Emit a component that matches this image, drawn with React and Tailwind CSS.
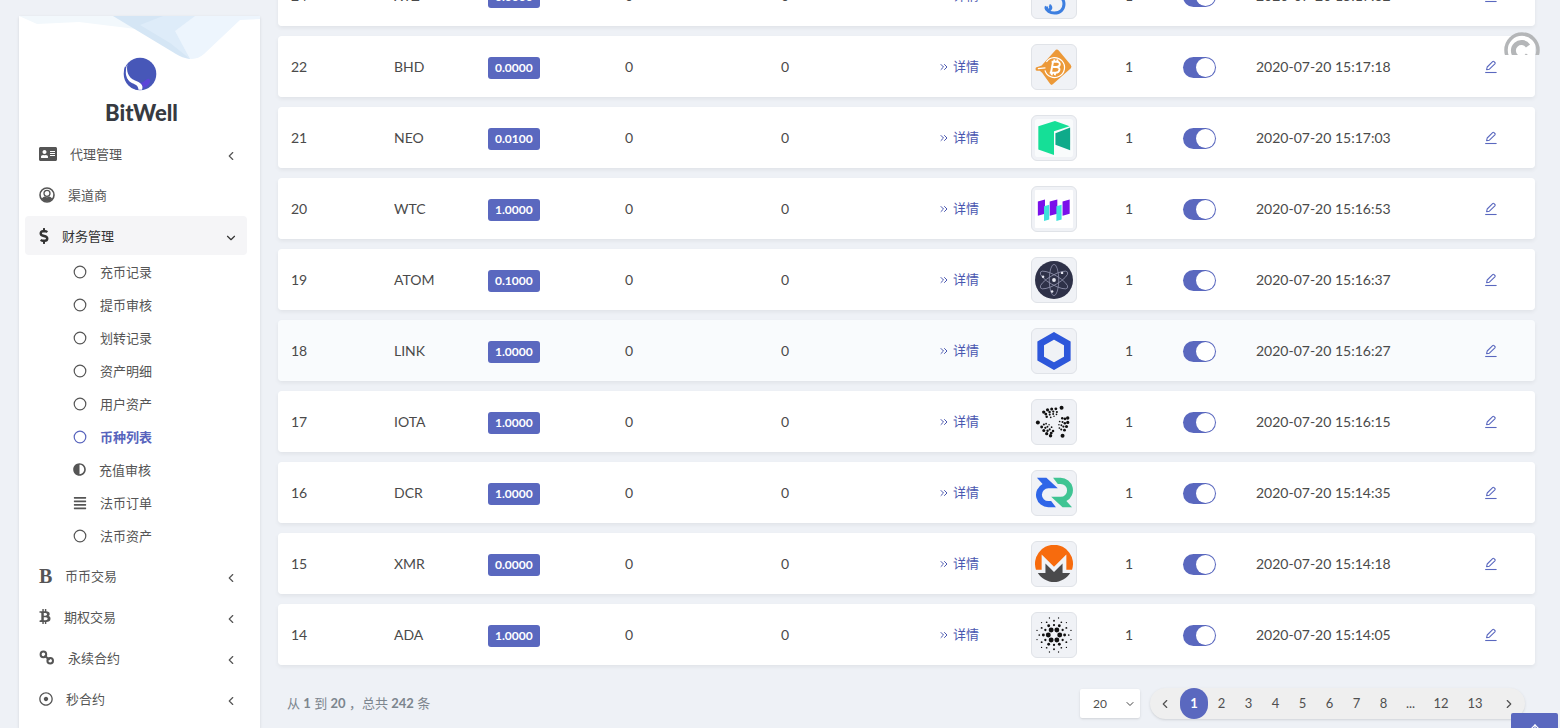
import React from 'react';
import {
  FaAddressCard,
  FaDollarSign,
  FaAdjust,
  FaAlignJustify,
  FaBtc,
  FaRegDotCircle,
} from 'react-icons/fa';
import { FiChevronLeft, FiChevronDown, FiChevronRight, FiChevronsRight, FiArrowUp } from 'react-icons/fi';

const ChainIcon = ({ className }) => (
  <svg viewBox="0 0 16 16" className={className} fill="none" stroke="currentColor" strokeWidth="2">
    <circle cx="4.4" cy="4.4" r="2.8" />
    <circle cx="11.2" cy="10.800" r="2.8" />
    <path d="M5.5 5.5l5 4.6" />
  </svg>
);

const CircleIcon = ({ className }) => (
  <svg viewBox="0 0 14 14" className={className} fill="none" stroke="currentColor" strokeWidth="1.2">
    <circle cx="7" cy="7" r="5.8" />
  </svg>
);

const UserCircleIcon = ({ className }) => (
  <svg viewBox="0 0 16 16" className={className} fill="none" stroke="currentColor">
    <circle cx="8" cy="8" r="7" strokeWidth="1.6" />
    <circle cx="8" cy="6.300" r="3" strokeWidth="1.3" />
    <path d="M2.500 12c1-1.800 2.300-2.300 3.300-2.600 1.300 1 3.100 1 4.400 0 1 .3 2.300.8 3.300 2.600A7 7 0 0 1 2.500 12z" fill="currentColor" stroke="none" />
  </svg>
);

const BoldIcon = () => (
  <span aria-hidden="true" className="w-[13px] font-['Liberation_Serif',serif] text-xl font-bold">
    B
  </span>
);

const EditIcon = () => (
  <svg viewBox="0 0 14 14" className="size-[14px]" fill="none" stroke="currentColor" strokeWidth="1.1" strokeLinejoin="round">
    <path d="M2.600 9.700l.6-2.700L8.600 1.600a1 1 0 0 1 1.400 0l.9.9a1 1 0 0 1 0 1.400L5.400 9.200z" />
    <path d="M1.2 12.500h11.400" />
  </svg>
);

const LogoIcon = () => (
  <svg viewBox="0 0 34 34" className="size-[34px]">
    <circle cx="17" cy="17" r="16.3" fill="#4757b8" />
    <path d="M17 26c5 0 6-5 9-4s0 8-6 9c0-3-1-4-3-5z" fill="#5b45d8" />
    <path d="M4.5 7C1 14 2 22 8 25.500c4 2.300 7 2 7.500 7.300h3.500c2-5-2-7.300-7-9.300C5 20.500 3 14 4.500 7z" fill="#fff" />
    <path d="M2.500 10c-2 8 1 15 7 18.500 2 1.200 3 2 4 4" fill="none" stroke="#4757b8" strokeWidth="1.500" />
  </svg>
);

const ringDots = (count, radius, size, offset) =>
  Array.from({ length: count }, (_, i) => {
    const angle = ((i * 360) / count + offset) * (Math.PI / 180);
    return (
      <circle
        key={`${radius}-${i}`}
        cx={20 + radius * Math.cos(angle)}
        cy={20 + radius * Math.sin(angle)}
        r={size}
      />
    );
  });

// spiral arms of the IOTA mark
const iotaDots = [0, 120, 240].flatMap((turn) =>
  [
    [17, -62, 2.1],
    [14, -82, 1.5],
    [14, -100, 1.6],
    [14.5, -118, 1.7],
    [15, -136, 1.8],
    [11, -74, 1.1],
    [11, -94, 1.2],
    [11.5, -114, 1.3],
    [12, -136, 1.5],
    [8.5, -72, 0.9],
    [8.5, -96, 1],
    [9, -120, 1.1],
    [9.5, -144, 1.3],
    [6, -90, 0.8],
    [6, -125, 0.9],
  ].map(([r, deg, size]) => {
    const angle = (deg + turn) * (Math.PI / 180);
    return (
      <circle key={`${turn}-${r}-${deg}`} cx={20 + r * Math.cos(angle)} cy={20 + r * Math.sin(angle)} r={size} />
    );
  })
);

const decredWing = 'M2 4h10l12 11H14a6.500 6.500 0 0 0 0 13.500h3l5 6.500H14A13 13 0 0 1 8 10.500z';

const coinIcons = {
  XTZ: (
    <path d="M12 31c0 5 4 7 8.500 7 6 0 10-4 10-9.500s-4-8.500-9-8.500l8-9H14M12 31a2.500 2.500 0 1 0 3-1" fill="none" stroke="#3d7fe0" strokeWidth="3.200" />
  ),
  BHD: (
    <g>
      <path d="M25 2.500l12.500 15a3 3 0 0 1 0 4L19 38a2 2 0 0 1-3 0L7.500 26 5 24H2.500a2 2 0 0 1 0-4L7 18.500 21 3a2.700 2.700 0 0 1 4-.5z" fill="#ec9938" />
      <path d="M12 14.500a10.500 10.500 0 1 1-1.500 9M3 21.800l8-.8" fill="none" stroke="#fff" strokeWidth="1.300" />
      <path d="M17.500 14.500h5.500c4.500 0 4 5.500-.5 5.500h-3.500 3.500c5 0 4 6-1 6h-6M19 14.500L16.800 26M20.500 12l-.5 2.500M23.800 12l-.5 2.500M18 26.200l-.5 2.500M21.300 26.200l-.5 2.500" fill="none" stroke="#fff" strokeWidth="2" />
    </g>
  ),
  NEO: (
    <g>
      <rect width="40" height="40" rx="3" fill="#f9fbfc" />
      <path d="M3.500 7.500L21 2l15.500 5.500L20 13v25L3.500 32z" fill="#15df97" />
      <path d="M21.500 15L37 9v24l-15.500-6z" fill="#0faa8a" />
    </g>
  ),
  WTC: (
    <g>
      <rect width="40" height="40" rx="1" fill="#fff" />
      <path d="M3 12l7.500-2v15L3 27zM15.500 12l8-2v15l-8 2zM29 12l7.500-2v15L29 27z" fill="#7a10ea" />
      <path d="M9.500 17l5.500-1.500V31l-5.500 1.500zM22.500 17l5.500-1.500V31l-5.500 1.500z" fill="#3fe3dc" />
    </g>
  ),
  ATOM: (
    <g>
      <circle cx="20" cy="20" r="20" fill="#2e3148" />
      <g fill="none" stroke="#9193ae" strokeWidth="0.800">
        <ellipse cx="20" cy="20" rx="5" ry="16.500" />
        <ellipse cx="20" cy="20" rx="5" ry="16.500" transform="rotate(60 20 20)" />
        <ellipse cx="20" cy="20" rx="5" ry="16.500" transform="rotate(120 20 20)" />
      </g>
      <g fill="#e6e7f0">
        <circle cx="20" cy="20" r="2" />
        <circle cx="28.500" cy="12.500" r="1.300" />
        <circle cx="8.500" cy="16.500" r="1.300" />
        <circle cx="18" cy="32" r="1.300" />
      </g>
    </g>
  ),
  LINK: <path d="M20 4l14 8v16l-14 8-14-8V12z" fill="none" stroke="#2d57da" strokeWidth="7" />,
  IOTA: <g fill="#111">{iotaDots}</g>,
  DCR: (
    <g>
      <path d={decredWing} fill="#2f66e8" />
      <path d={decredWing} fill="#3fc493" transform="rotate(180 20.500 19.500)" />
    </g>
  ),
  XMR: (
    <g>
      <path d="M1 26A20 20 0 1 1 39 26h-6V10L20 23 7 10v16z" fill="#f76b0d" />
      <path d="M3 29.500h8v-10l9 9 9-9v10h8a20 20 0 0 1-34 0z" fill="#4a4a4c" />
    </g>
  ),
  ADA: (
    <g fill="#111">
      {ringDots(6, 6, 2.6, 0)}
      {ringDots(6, 10.5, 1.2, 30)}
      {ringDots(6, 11.2, 1.5, 0)}
      {ringDots(6, 15, 1, 30)}
      {ringDots(6, 15.5, 0.9, 0)}
      {ringDots(12, 18.5, 0.7, 15)}
    </g>
  ),
};

const menuTop = [
  { label: '代理管理', icon: FaAddressCard, size: 'size-[18px]', chevron: 'left' },
  { label: '渠道商', icon: UserCircleIcon, size: 'size-4' },
  { label: '财务管理', icon: FaDollarSign, size: 'h-4 w-[10px]', chevron: 'down', open: true },
];

const subMenu = [
  { label: '充币记录', icon: CircleIcon },
  { label: '提币审核', icon: CircleIcon },
  { label: '划转记录', icon: CircleIcon },
  { label: '资产明细', icon: CircleIcon },
  { label: '用户资产', icon: CircleIcon },
  { label: '币种列表', icon: CircleIcon, active: true },
  { label: '充值审核', icon: FaAdjust, half: true },
  { label: '法币订单', icon: FaAlignJustify },
  { label: '法币资产', icon: CircleIcon },
];

const menuBottom = [
  { label: '币币交易', icon: BoldIcon, chevron: 'left' },
  { label: '期权交易', icon: FaBtc, size: 'h-[15px] w-3', chevron: 'left' },
  { label: '永续合约', icon: ChainIcon, size: 'size-4', chevron: 'left' },
  { label: '秒合约', icon: FaRegDotCircle, size: 'size-[14px]', chevron: 'left' },
];

const rows = [
  { id: 24, name: 'XTZ', min: '0.0000', time: '2020-07-20 15:17:32' },
  { id: 22, name: 'BHD', min: '0.0000', time: '2020-07-20 15:17:18' },
  { id: 21, name: 'NEO', min: '0.0100', time: '2020-07-20 15:17:03' },
  { id: 20, name: 'WTC', min: '1.0000', time: '2020-07-20 15:16:53' },
  { id: 19, name: 'ATOM', min: '0.1000', time: '2020-07-20 15:16:37' },
  { id: 18, name: 'LINK', min: '1.0000', time: '2020-07-20 15:16:27', hover: true },
  { id: 17, name: 'IOTA', min: '1.0000', time: '2020-07-20 15:16:15' },
  { id: 16, name: 'DCR', min: '1.0000', time: '2020-07-20 15:14:35' },
  { id: 15, name: 'XMR', min: '0.0000', time: '2020-07-20 15:14:18' },
  { id: 14, name: 'ADA', min: '1.0000', time: '2020-07-20 15:14:05' },
];

const pages = ['1', '2', '3', '4', '5', '6', '7', '8', '...', '12', '13'];

const MenuItem = ({ item }) => {
  const Icon = item.icon;
  return (
    <a
      href="#"
      className={`flex h-[39px] items-center gap-[13px] rounded pr-[9px] pl-[14px] ${
        item.open ? 'bg-[#f5f5f7] text-[#333]' : 'text-[#555]'
      }`}
    >
      <Icon className={item.size} />
      <span className="flex-1">{item.label}</span>
      {item.chevron === 'left' && <FiChevronLeft className="mt-1 size-[14px]" />}
      {item.chevron === 'down' && <FiChevronDown className="mt-1 size-[14px]" />}
    </a>
  );
};

const Sidebar = () => (
  <aside className="relative mt-4 ml-[19px] w-[241px] shrink-0 overflow-hidden bg-white shadow-sm">
    <svg viewBox="0 0 241 44" className="absolute top-0 left-0 w-full">
      <path d="M0 0h100l25 14L60 6 18 8z" fill="#f2f8fc" />
      <path d="M135 0h106v3l-20 1-36 34q-8 7-18 4z" fill="#edf5fd" />
      <path d="M94 0h50l10 16 17 27q-8-1-14-5z" fill="#d5e6f5" />
      <path d="M144 0h32l-20 15 15 28-20-16-30-18z" fill="#deecf9" />
    </svg>
    <div className="relative flex flex-col items-center pt-[41px]">
      <LogoIcon />
      <h1 className="mt-2 pl-1 text-[22px] leading-7 font-black text-[#363a41]">BitWell</h1>
    </div>
    <nav className="mt-[7px] pr-[13px] pl-[6px] text-[13px] leading-5">
      <div className="flex flex-col gap-[2px]">
        {menuTop.map((item) => (
          <MenuItem key={item.label} item={item} />
        ))}
      </div>
      <ul className="pb-1">
        {subMenu.map(({ label, icon: Icon, active, half }) => (
          <li key={label}>
            <a
              href="#"
              className={`flex h-[33px] items-center gap-[13px] pl-12 ${
                active ? 'font-bold text-[#5864bd]' : 'text-[#555]'
              }`}
            >
              <Icon className={half ? 'size-[13px]' : 'size-[14px]'} />
              {label}
            </a>
          </li>
        ))}
      </ul>
      <div className="flex flex-col gap-[2px]">
        {menuBottom.map((item) => (
          <MenuItem key={item.label} item={item} />
        ))}
      </div>
    </nav>
  </aside>
);

const CoinRow = ({ row }) => {
  const cell = `h-[61px] p-0 pl-[13px] ${row.hover ? 'bg-[#f9fbfd]' : 'bg-white'}`;
  return (
    <tr className="rounded shadow-[0_2px_4px_rgba(0,0,0,0.06)]">
      <td className={`${cell} rounded-l`}>{row.id}</td>
      <td className={cell}>{row.name}</td>
      <td className={cell}>
        <span className="mt-[2px] inline-flex h-[22px] items-center rounded-[3px] bg-[#5a68bf] px-[7px] text-xs font-bold text-white">
          {row.min}
        </span>
      </td>
      <td className={cell}>0</td>
      <td className={cell}>0</td>
      <td className={cell}>
        <a href="#" className="flex items-center gap-[3px] text-[13px] text-[#4a57b0]">
          <FiChevronsRight className="size-3" />
          详情
        </a>
      </td>
      <td className={cell}>
        <div className="flex size-[46px] items-center justify-center rounded-md border border-[#e0e3e8] bg-[#f0f2f6]">
          <svg viewBox="0 0 40 40" className="size-[38px]">
            {coinIcons[row.name]}
          </svg>
        </div>
      </td>
      <td className={cell}>1</td>
      <td className={cell}>
        <input
          type="checkbox"
          role="switch"
          defaultChecked
          aria-label={`${row.name} 状态`}
          className="mt-[2px] flex h-[21px] w-[33px] appearance-none justify-end rounded-full bg-[#5a68bf] p-px before:size-[19px] before:rounded-full before:bg-white before:content-['']"
        />
      </td>
      <td className={cell}>{row.time}</td>
      <td className={`${cell} rounded-r`}>
        <button type="button" aria-label={`编辑 ${row.name}`} className="flex text-[#5a68bf]">
          <EditIcon />
        </button>
      </td>
    </tr>
  );
};

const Pagination = () => (
  <div className="mt-[13px] flex items-center pr-[10px] pl-[9px]">
    <p className="flex-1 text-[13px] text-[#7c858e]">
      从 <b>1</b> 到 <b>20</b> ，总共 <b>242</b> 条
    </p>
    <div className="relative mr-[10px]">
      <select
        aria-label="每页条数"
        defaultValue="20"
        className="h-[29px] w-[60px] appearance-none rounded-xs bg-white pl-[13px] text-xs text-[#505050] shadow"
      >
        <option>20</option>
        <option>50</option>
        <option>100</option>
      </select>
      <FiChevronDown className="pointer-events-none absolute top-[9px] right-1 size-3 text-[#444]" />
    </div>
    <nav className="flex h-[31px] items-center rounded-full bg-[#efefef] text-[13px] text-[#505050] shadow-sm">
      <button type="button" aria-label="上一页" className="flex w-[30px] justify-center">
        <FiChevronLeft className="size-[14px]" />
      </button>
      {pages.map((page) => (
        <button
          key={page}
          type="button"
          className={
            page === '1'
              ? 'h-[31px] w-7 rounded-full bg-[#5a68bf] font-bold text-white'
              : page.length === 2
                ? 'w-[34px]'
                : 'w-[27px]'
          }
        >
          {page}
        </button>
      ))}
      <button type="button" aria-label="下一页" className="flex w-[33px] justify-center">
        <FiChevronRight className="size-[14px]" />
      </button>
    </nav>
  </div>
);

const App = () => {
  return (
    <div
      className="relative flex h-screen overflow-hidden bg-[#eef1f6] text-[#4a4a4a]"
      style={{ fontFamily: 'Lato, "Noto Sans CJK SC", sans-serif' }}
    >
      <Sidebar />

      <main className="flex min-w-0 flex-1 flex-col justify-end pr-[25px] pb-[9px] pl-[18px]">
        <table className="w-full shrink-0 table-fixed border-separate border-spacing-x-0 border-spacing-y-[10px] text-sm">
          <colgroup>
            <col className="w-[103px]" />
            <col className="w-[94px]" />
            <col className="w-[137px]" />
            <col className="w-[156px]" />
            <col className="w-[157px]" />
            <col className="w-[93px]" />
            <col className="w-[94px]" />
            <col className="w-[58px]" />
            <col className="w-[73px]" />
            <col />
            <col className="w-[64px]" />
          </colgroup>
          <tbody>
            {rows.map((row) => (
              <CoinRow key={row.id} row={row} />
            ))}
          </tbody>
        </table>
        <Pagination />
      </main>

      <div className="absolute top-8 right-5 h-[23px] w-9 overflow-hidden">
        <svg viewBox="0 0 36 36" className="size-9" fill="none" stroke="#b4b6b8">
          <circle cx="18" cy="18" r="16" strokeWidth="3.500" />
          <path d="M24 14a8 8 0 1 0 0 9" strokeWidth="5" />
        </svg>
      </div>

      <button
        type="button"
        aria-label="返回顶部"
        className="absolute right-[2px] -bottom-[15px] flex h-[30px] w-[47px] justify-center rounded-xs bg-[#5a68bf] pt-[9px] text-white"
      >
        <FiArrowUp className="size-[14px]" />
      </button>
    </div>
  );
};

export default App;
